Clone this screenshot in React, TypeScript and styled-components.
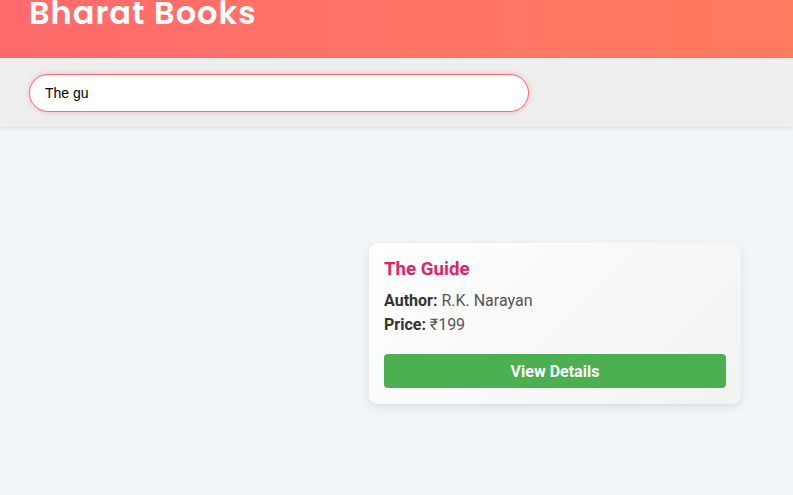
import React from "react";
import styled, { createGlobalStyle } from "styled-components";

const Global = createGlobalStyle`
  html, body { margin: 0; padding: 0; }
  body {
    background: #f3f6f9;
    font-family: Roboto, "Liberation Sans", Arial, sans-serif;
    overflow: hidden;
  }
  * { box-sizing: border-box; }
`;

const Page = styled.div`
  min-height: 495px;
  background: #f3f6f9;
  display: flex;
  flex-direction: column;
`;

const Header = styled.header`
  height: 58px;
  background: linear-gradient(90deg, #ff6b6b 0%, #ff7b5f 100%);
  display: flex;
  align-items: flex-start;
  padding-left: 29px;
  overflow: hidden;
`;

const Title = styled.h1`
  margin: -10px 0 0;
  font-family: Poppins, "Open Sans", "DejaVu Sans", sans-serif;
  font-weight: 600;
  font-size: 32px;
  line-height: 46px;
  letter-spacing: 1px;
  color: #ffffff;
`;

const SearchBar = styled.div`
  height: 69px;
  background: #eeeeee;
  display: flex;
  align-items: center;
  padding-left: 29px;
  box-shadow: 0 2px 4px rgba(0, 0, 0, 0.08);
  position: relative;
  z-index: 1;
`;

const SearchInput = styled.input`
  width: 500px;
  height: 38px;
  border-radius: 19px;
  border: 1px solid #ff6b6b;
  box-shadow: 0 0 5px rgba(255, 107, 107, 0.45);
  background: #ffffff;
  padding: 0 15px;
  font-family: "Liberation Sans", Arial, sans-serif;
  font-size: 14px;
  color: #000;
  outline: none;
`;

const Results = styled.main`
  display: flex;
  justify-content: flex-end;
  padding: 116px 52px 0 0;
`;

const Card = styled.article`
  width: 372px;
  border-radius: 9px;
  background: linear-gradient(135deg, #ffffff 0%, #f2f2f3 100%);
  box-shadow: 0 3px 10px rgba(0, 0, 0, 0.1);
  padding: 14px 15px 16px;
  display: flex;
  flex-direction: column;
`;

const BookTitle = styled.h3`
  margin: 0 0 8px;
  font-size: 18.7px;
  line-height: 24px;
  font-weight: 700;
  color: #e91e63;
`;

const Info = styled.p`
  margin: 0;
  font-size: 16px;
  line-height: 24px;
  color: #555;
  b { color: #333; font-weight: 700; }
`;

const Button = styled.button`
  margin-top: 17px;
  height: 34px;
  border: none;
  border-radius: 4px;
  background: #4caf50;
  color: #fff;
  font-family: Roboto, "Liberation Sans", Arial, sans-serif;
  font-size: 16px;
  font-weight: 700;
  cursor: pointer;
`;

export default function App() {
  return (
    <Page>
      <Global />
      <Header>
        <Title>Bharat Books</Title>
      </Header>
      <SearchBar>
        <SearchInput defaultValue="The gu" />
      </SearchBar>
      <Results>
        <Card>
          <BookTitle>The Guide</BookTitle>
          <Info><b>Author:</b> R.K. Narayan</Info>
          <Info><b>Price:</b> ₹199</Info>
          <Button>View Details</Button>
        </Card>
      </Results>
    </Page>
  );
}
